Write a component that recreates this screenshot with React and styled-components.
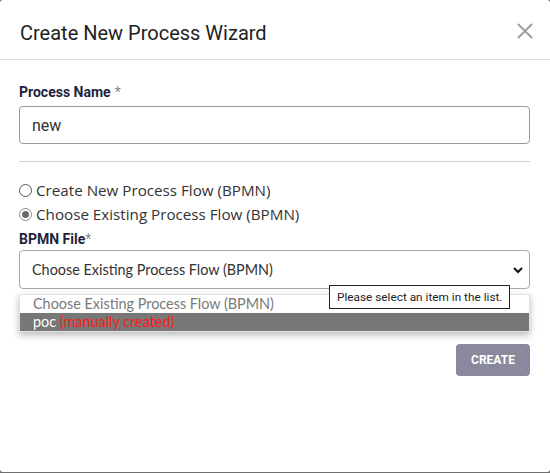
import React from 'react';
import styled, { createGlobalStyle } from 'styled-components';

const Global = createGlobalStyle`
  html, body { margin: 0; padding: 0; background: #6f6f6f; }
  body { width: 550px; height: 473px; overflow: hidden; }
`;

const Modal = styled.div`
  position: relative;
  width: 550px;
  height: 472px;
  background: #fff;
  border-radius: 3px;
  font-family: Roboto, "Liberation Sans", sans-serif;
`;

const Header = styled.div`
  display: flex;
  align-items: center;
  justify-content: space-between;
  height: 60px;
  padding: 0 15px 0 20px;
  border-bottom: 1px solid #dcdcdc;
  box-sizing: border-box;
`;

const Title = styled.h2`
  margin: 0;
  font-size: 20px;
  font-weight: 400;
  color: #222;
  line-height: 24px;
  padding-top: 6px;
`;

const Close = styled.button`
  border: 0;
  background: none;
  padding: 0;
  width: 18px;
  height: 18px;
  display: flex;
  margin-top: 5px;
  cursor: pointer;
`;

const Body = styled.div`
  position: relative;
  padding: 24px 20px 0 19px;
`;

const Label = styled.div`
  font-size: 14px;
  font-weight: 700;
  color: #231f3d;
  line-height: 16px;
  margin: ${p => p.$mt || 0}px 0 ${p => p.$mb || 0}px;
  span { color: #888; font-weight: 400; margin-left: ${p => p.$gap || 0}px; }
`;

const TextInput = styled.div`
  height: 38px;
  border: 1px solid #9a9a9a;
  border-radius: 4px;
  box-sizing: border-box;
  display: flex;
  align-items: center;
  padding: 0 12px;
  font-size: 16px;
  color: #333;
`;

const Divider = styled.hr`
  border: 0;
  border-top: 1px solid #d0d0d0;
  margin: 17px 0 16px;
`;

const RadioRow = styled.label`
  display: flex;
  align-items: center;
  gap: 4px;
  height: 24px;
  font-family: "Open Sans", sans-serif;
  font-size: 15.2px;
  color: #333;
`;

const Radio = styled.span`
  width: 11px;
  height: 11px;
  border-radius: 50%;
  border: 1px solid ${p => (p.$checked ? '#8a8a8a' : '#555')};
  display: flex;
  align-items: center;
  justify-content: center;
  margin-top: 1px;
  &::after {
    content: '';
    width: 7px;
    height: 7px;
    border-radius: 50%;
    background: ${p => (p.$checked ? '#6a6a6a' : 'transparent')};
  }
`;

const Select = styled.div`
  height: 39px;
  border: 1px solid #a8a8a8;
  border-radius: 4px;
  box-sizing: border-box;
  display: flex;
  align-items: center;
  justify-content: space-between;
  padding: 0 4px 0 12px;
  font-family: Lato, sans-serif;
  font-size: 14.4px;
  color: #333;
  margin-top: 3px;
`;

const Popup = styled.div`
  position: absolute;
  left: 19px;
  right: 20px;
  top: 234px;
  background: #fff;
  border: 1px solid #e2e2e2;
  box-shadow: 0 3px 7px rgba(0, 0, 0, 0.28);
  font-family: Lato, sans-serif;
  font-size: 14.4px;
`;

const Option = styled.div`
  height: 18px;
  line-height: 18px;
  padding: 0 13px;
  color: ${p => (p.$active ? '#fff' : '#7a7a7a')};
  background: ${p => (p.$active ? '#777' : 'transparent')};
  span { color: #ff1a1a; }
`;

const Tip = styled.div`
  position: absolute;
  left: 329px;
  top: 225px;
  height: 24px;
  box-sizing: border-box;
  padding: 0 7px;
  background: #fff;
  border: 1px solid #222;
  font-size: 11.8px;
  line-height: 22px;
  color: #222;
  z-index: 2;
`;

const Footer = styled.div`
  display: flex;
  justify-content: flex-end;
  padding-top: 55px;
`;

const CreateButton = styled.button`
  width: 74px;
  height: 32px;
  border: 0;
  border-radius: 4px;
  background: #8a889c;
  color: #fff;
  font-family: Roboto, sans-serif;
  font-size: 12px;
  font-weight: 700;
  text-transform: uppercase;
`;

export default function App() {
  return (
    <>
      <Global />
      <Modal>
        <Header>
          <Title>Create New Process Wizard</Title>
          <Close aria-label="close">
            <svg width="16" height="16" viewBox="0 0 16 16">
              <path d="M1 1L15 15M15 1L1 15" stroke="#9a9a9a" strokeWidth="1.8" />
            </svg>
          </Close>
        </Header>
        <Body>
          <Label $gap={4} $mb={6}>Process Name<span>*</span></Label>
          <TextInput>new</TextInput>
          <Divider />
          <RadioRow><Radio />Create New Process Flow (BPMN)</RadioRow>
          <RadioRow><Radio $checked />Choose Existing Process Flow (BPMN)</RadioRow>
          <Label $mt={5}>BPMN File<span>*</span></Label>
          <Select>
            Choose Existing Process Flow (BPMN)
            <svg width="14" height="14" viewBox="0 0 14 14">
              <path d="M3 5l4 4 4-4" fill="none" stroke="#111" strokeWidth="2" />
            </svg>
          </Select>
          <Popup>
            <Option>Choose Existing Process Flow (BPMN)</Option>
            <Option $active>poc <span>(manually created)</span></Option>
          </Popup>
          <Tip>Please select an item in the list.</Tip>
          <Footer>
            <CreateButton>Create</CreateButton>
          </Footer>
        </Body>
      </Modal>
    </>
  );
}
